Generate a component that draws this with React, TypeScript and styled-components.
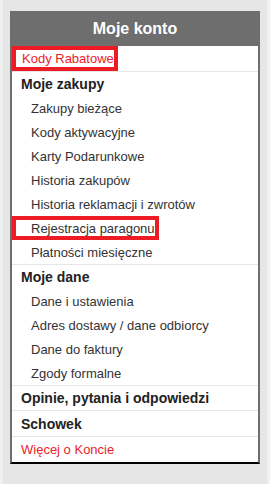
import React from 'react'
import styled, { createGlobalStyle } from 'styled-components'

const GlobalStyle = createGlobalStyle`
  html, body {
    margin: 0;
    padding: 0;
    background: #f0f0f0;
    font-family: Arial, "Liberation Sans", sans-serif;
  }
`

const Page = styled.div`
  margin: 0 3px;
  min-height: 484px;
  background: #e6e6e6;
  padding: 11px 7px 0;
  box-sizing: border-box;
`

const Panel = styled.div`
  width: 250px;
`

const Header = styled.div`
  height: 35px;
  background: #6e6e6e;
  color: #fff;
  font-weight: bold;
  font-size: 16px;
  display: flex;
  align-items: center;
  justify-content: center;
`

const Body = styled.div`
  background: #fff;
  border-left: 2px solid #6e6e6e;
  border-right: 2px solid #6e6e6e;
  border-bottom: 2px solid #000;
`

const Group = styled.div<{ $last?: boolean }>`
  display: flex;
  flex-direction: column;
  align-items: flex-start;
  border-bottom: ${p => (p.$last ? 'none' : '1px solid #e6e6e6')};
`

const Item = styled.div<{ $sub?: boolean; $red?: boolean; $bold?: boolean; $boxed?: boolean; $h?: number }>`
  box-sizing: border-box;
  height: ${p => p.$h ?? 24}px;
  display: flex;
  align-items: center;
  padding-left: ${p => (p.$sub ? 19 : 9)}px;
  font-size: ${p => (p.$bold ? 14 : 13)}px;
  font-weight: ${p => (p.$bold ? 'bold' : 'normal')};
  color: ${p => (p.$red ? '#ec1c2a' : p.$bold ? '#222' : '#333')};
  white-space: nowrap;
  ${p =>
    p.$boxed &&
    `
    border: 4px solid #ed1c24;
    padding-left: ${p.$sub ? 15 : 6}px;
  `}
`

const App: React.FC = () => {
  return (
    <>
      <GlobalStyle />
      <Page>
        <Panel>
          <Header>Moje konto</Header>
          <Body>
            <Group>
              <Item $red $boxed $h={25}>Kody Rabatowe</Item>
            </Group>
            <Group>
              <Item $bold>Moje zakupy</Item>
              <Item $sub>Zakupy bieżące</Item>
              <Item $sub>Kody aktywacyjne</Item>
              <Item $sub>Karty Podarunkowe</Item>
              <Item $sub>Historia zakupów</Item>
              <Item $sub>Historia reklamacji i zwrotów</Item>
              <Item $sub $boxed>Rejestracja paragonu</Item>
              <Item $sub>Płatności miesięczne</Item>
            </Group>
            <Group>
              <Item $bold>Moje dane</Item>
              <Item $sub>Dane i ustawienia</Item>
              <Item $sub>Adres dostawy / dane odbiorcy</Item>
              <Item $sub>Dane do faktury</Item>
              <Item $sub>Zgody formalne</Item>
            </Group>
            <Group>
              <Item $bold>Opinie, pytania i odpowiedzi</Item>
            </Group>
            <Group>
              <Item $bold $h={25}>Schowek</Item>
            </Group>
            <Group $last>
              <Item $red $h={25}>Więcej o Koncie</Item>
            </Group>
          </Body>
        </Panel>
      </Page>
    </>
  )
}

export default App
